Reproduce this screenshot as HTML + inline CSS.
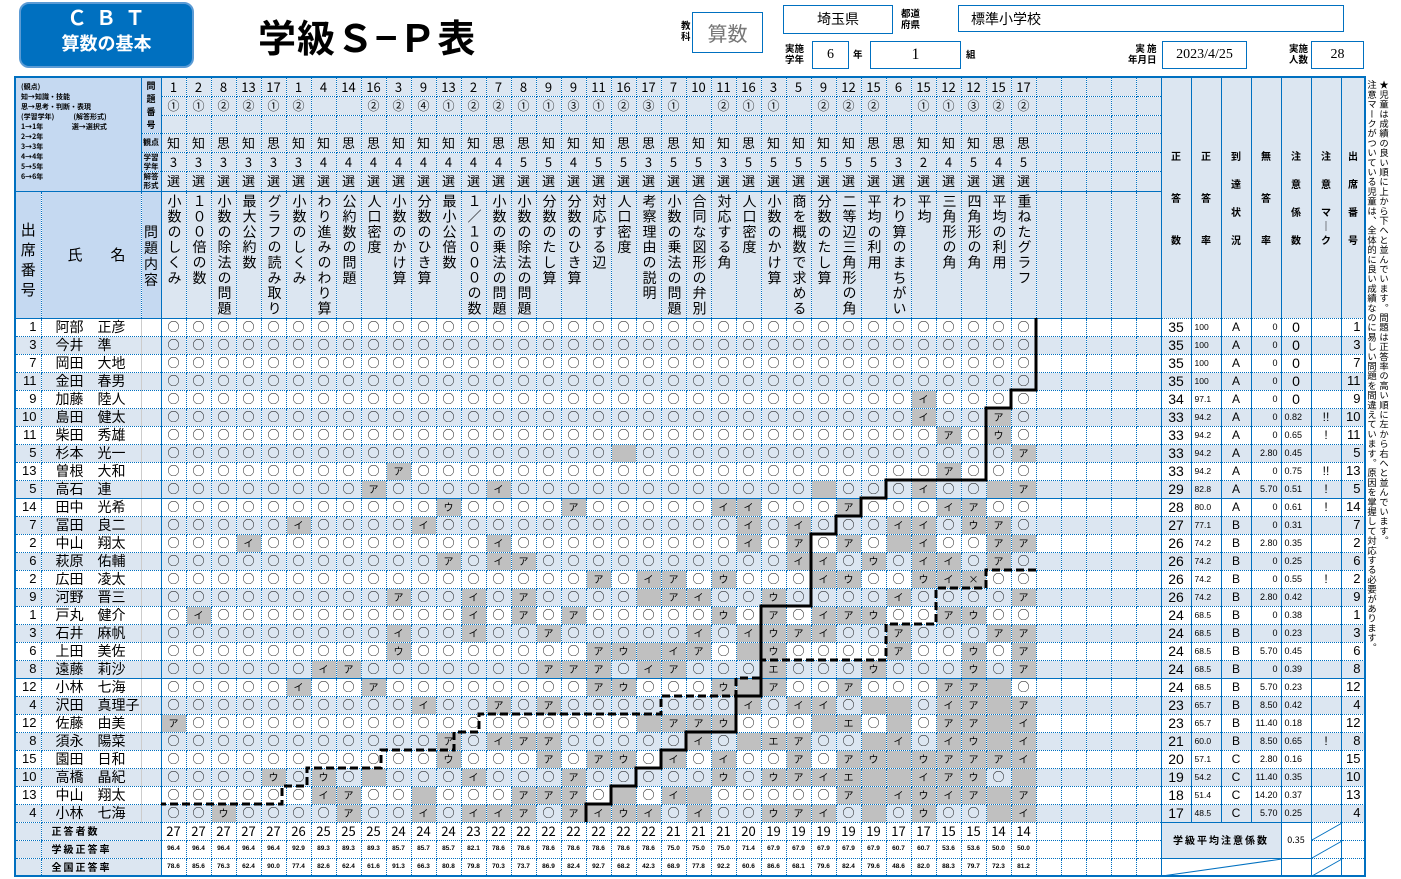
<!DOCTYPE html>
<html><head><meta charset="utf-8">
<style>
body{margin:0;width:1401px;height:879px;position:relative;background:#fff;font-family:"Liberation Sans","Noto Sans CJK JP",sans-serif;overflow:hidden;color:#000}
.abs{position:absolute}
.logo{left:19px;top:2px;width:171px;height:62px;background:#0070c0;border:2px solid #5b9bd5;border-radius:10px;color:#fff;text-align:center;font-weight:bold}
.title{left:258px;top:8px;font-size:38px;font-weight:bold;letter-spacing:1px;font-family:"Noto Sans CJK JP",sans-serif}
.bx{border:1px solid #0070c0;text-align:center;font-family:"Liberation Serif","Noto Sans CJK JP",serif}
.lbl{font-size:9.5px;line-height:11px;font-weight:bold;font-family:"Noto Sans CJK JP",sans-serif}
#t{position:absolute;left:14px;top:76px;border-collapse:collapse;table-layout:fixed;width:1351px;border:2px solid #0070c0}
#t td{border:1px dotted #0070c0;padding:0;text-align:center;font-size:12px;line-height:14px;overflow:hidden;white-space:nowrap;font-family:"Noto Sans CJK JP",sans-serif}
#t tr.d{height:18px}
#t tr.e td{background:#dce6f1}
#t tr td.g{background:#c0c0c0;font-size:10px}
#t tr.s td{border-bottom:1px solid #0070c0}
#t tr.d td:nth-child(n+44){border-left:1px solid #0070c0;border-right:1px solid #0070c0;font-family:"Liberation Sans",sans-serif}
#t td.k{border-left:1px solid #ccc;border-right:1px solid #0070c0}
#t td.nm{text-align:right;padding-right:4px;font-size:13px;font-family:"Liberation Sans",sans-serif}
#t td.n{text-align:left;padding-left:14px;font-size:14px}
#t td.c{background:#c5d9f1}
#t tr.h td{background:#dce6f1}
#t tr.h td.c{background:#c5d9f1}
#t tr.hb td{border-bottom:1px solid #0070c0}
#t td.rc{background:#c5d9f1;border-left:1px solid #0070c0;border-right:1px solid #0070c0;font-size:10px;line-height:14px;font-weight:bold;white-space:normal}
#t td.p{font-size:8.5px;text-align:left;padding-left:3px}
#t td.q{font-size:9px;text-align:right;padding-right:3px}
#t td.w{font-size:9px;text-align:left;padding-left:3px}
#t td.big{font-size:14px}
.v{writing-mode:vertical-rl;font-size:14px;line-height:25px;width:25px;height:124px;margin:2px auto 0;letter-spacing:1.3px;font-family:"Noto Sans CJK JP",sans-serif;text-align:left}
#t td.f1{font-size:13px}
#t tr.fr td{font-size:6.5px;font-weight:bold;font-family:"Liberation Sans",sans-serif}
#t td.fl{background:#dce6f1;text-align:left;padding-left:10px;font-size:10px!important;font-weight:bold;letter-spacing:2px;font-family:"Noto Sans CJK JP",sans-serif!important}
.note{left:1366px;top:80px;writing-mode:vertical-rl;font-size:9.3px;line-height:12px;letter-spacing:0.4px;height:600px;font-family:"Noto Sans CJK JP",sans-serif}
</style></head><body>
<div class="abs logo"><div style="font-size:20px;letter-spacing:9px;margin-top:3px;line-height:24px;padding-left:8px">ＣＢＴ</div><div style="font-size:18px;line-height:24px;font-family:'Noto Sans CJK JP',sans-serif">算数の基本</div></div>
<div class="abs title">学級Ｓ−Ｐ表</div>

<div class="abs lbl" style="left:681px;top:20px;width:10px">教<br>科</div>
<div class="abs bx" style="left:692px;top:12px;width:69px;height:39px;line-height:39px;font-size:20px;color:#777;font-family:'Noto Sans CJK JP',sans-serif">算数</div>
<div class="abs bx" style="left:783px;top:5px;width:108px;height:27px;line-height:27px;font-size:14px;font-family:'Noto Sans CJK JP',sans-serif">埼玉県</div>
<div class="abs lbl" style="left:901px;top:8px">都道<br>府県</div>
<div class="abs bx" style="left:958px;top:5px;height:27px;line-height:27px;font-size:14px;text-align:left;padding-left:12px;box-sizing:border-box;width:386px;font-family:'Noto Sans CJK JP',sans-serif">標準小学校</div>
<div class="abs lbl" style="left:785px;top:43px">実施<br>学年</div>
<div class="abs bx" style="left:812px;top:41px;width:35px;height:26px;line-height:26px;font-size:14px">6</div>
<div class="abs lbl" style="left:853px;top:49px">年</div>
<div class="abs bx" style="left:870px;top:41px;width:89px;height:26px;line-height:26px;font-size:16px">1</div>
<div class="abs lbl" style="left:966px;top:49px">組</div>
<div class="abs lbl" style="left:1128px;top:43px;text-align:right">実 施<br>年月日</div>
<div class="abs bx" style="left:1162px;top:41px;width:83px;height:26px;line-height:26px;font-size:14px">2023/4/25</div>
<div class="abs lbl" style="left:1289px;top:43px">実施<br>人数</div>
<div class="abs bx" style="left:1311px;top:41px;width:51px;height:26px;line-height:26px;font-size:14px">28</div>

<div class="abs note">★児童は成績の良い順に上から下へと並んでいます。問題は正答率の高い順に左から右へと並んでいます。<br>注意マークがついている児童は、全体的に良い成績なのに易しい問題を間違えています。原因を掌握して対応する必要があります。</div>

<table id="t">
<colgroup><col style="width:26px"><col style="width:100px"><col style="width:20px">
<col style="width:25px"><col style="width:25px"><col style="width:25px"><col style="width:25px"><col style="width:25px"><col style="width:25px"><col style="width:25px"><col style="width:25px"><col style="width:25px"><col style="width:25px"><col style="width:25px"><col style="width:25px"><col style="width:25px"><col style="width:25px"><col style="width:25px"><col style="width:25px"><col style="width:25px"><col style="width:25px"><col style="width:25px"><col style="width:25px"><col style="width:25px"><col style="width:25px"><col style="width:25px"><col style="width:25px"><col style="width:25px"><col style="width:25px"><col style="width:25px"><col style="width:25px"><col style="width:25px"><col style="width:25px"><col style="width:25px"><col style="width:25px"><col style="width:25px"><col style="width:25px"><col style="width:25px">
<col style="width:25px"><col style="width:25px"><col style="width:25px"><col style="width:25px"><col style="width:25px">
<col style="width:30px"><col style="width:30px"><col style="width:30px"><col style="width:30px"><col style="width:30px"><col style="width:30px"><col style="width:24px"></colgroup>

<tr class="h" style="height:19px;font-size:14px">
<td colspan="2" rowspan="6" class="c" style="text-align:left;vertical-align:top;padding:4px 0 0 5px;font-size:7px;line-height:10px;font-weight:bold;white-space:pre;border-right:1px solid #0070c0;border-bottom:1px solid #0070c0;font-family:'Noto Sans CJK JP',sans-serif">(観点)
知→知識・技能
思→思考・判断・表現
(学習学年)            (解答形式)
1→1年                  選→選択式
2→2年
3→3年
4→4年
5→5年
6→6年</td>
<td rowspan="3" class="c" style="font-size:9px;line-height:13px;font-weight:bold;white-space:normal;border-right:1px solid #0070c0">問<br>題<br>番<br>号</td>
<td class=f1>1<td class=f1>2<td class=f1>8<td class=f1>13<td class=f1>17<td class=f1>1<td class=f1>4<td class=f1>14<td class=f1>16<td class=f1>3<td class=f1>9<td class=f1>13<td class=f1>2<td class=f1>7<td class=f1>8<td class=f1>9<td class=f1>9<td class=f1>11<td class=f1>16<td class=f1>17<td class=f1>7<td class=f1>10<td class=f1>11<td class=f1>16<td class=f1>3<td class=f1>5<td class=f1>9<td class=f1>12<td class=f1>15<td class=f1>6<td class=f1>15<td class=f1>12<td class=f1>12<td class=f1>15<td class=f1>17
<td><td><td><td><td>
<td rowspan="7" class="rc">正<br><br><br>答<br><br><br>数</td>
<td rowspan="7" class="rc">正<br><br><br>答<br><br><br>率</td>
<td rowspan="7" class="rc">到<br><br>達<br><br>状<br><br>況</td>
<td rowspan="7" class="rc">無<br><br><br>答<br><br><br>率</td>
<td rowspan="7" class="rc">注<br><br>意<br><br>係<br><br>数</td>
<td rowspan="7" class="rc">注<br><br>意<br><br>マ<br>｜<br>ク</td>
<td rowspan="7" class="rc">出<br><br>席<br><br>番<br><br>号</td>
</tr>
<tr class="h" style="height:19px"><td>①<td>①<td>②<td>②<td>①<td>②<td><td><td>②<td>②<td>④<td>①<td>②<td>②<td>①<td>①<td>③<td>①<td>②<td>③<td>①<td><td>②<td>①<td>①<td><td>②<td>②<td>②<td><td>①<td>①<td>③<td>②<td>②<td><td><td><td><td></tr>
<tr class="h" style="height:18px"><td><td><td><td><td><td><td><td><td><td><td><td><td><td><td><td><td><td><td><td><td><td><td><td><td><td><td><td><td><td><td><td><td><td><td><td><td><td><td><td><td></tr>
<tr class="h" style="height:19px;"><td class="c" style="font-size:8px;font-weight:bold;border-right:1px solid #0070c0">観点<td class=f1>知<td class=f1>知<td class=f1>思<td class=f1>知<td class=f1>思<td class=f1>知<td class=f1>知<td class=f1>思<td class=f1>思<td class=f1>知<td class=f1>知<td class=f1>知<td class=f1>知<td class=f1>思<td class=f1>思<td class=f1>知<td class=f1>知<td class=f1>知<td class=f1>思<td class=f1>思<td class=f1>思<td class=f1>知<td class=f1>知<td class=f1>思<td class=f1>知<td class=f1>知<td class=f1>知<td class=f1>知<td class=f1>思<td class=f1>思<td class=f1>知<td class=f1>知<td class=f1>知<td class=f1>思<td class=f1>思<td><td><td><td><td></tr>
<tr class="h" style="height:19px"><td class="c" style="font-size:7.5px;line-height:9px;font-weight:bold;white-space:normal;border-right:1px solid #0070c0">学習<br>学年<td class=f1>3<td class=f1>3<td class=f1>3<td class=f1>3<td class=f1>3<td class=f1>3<td class=f1>4<td class=f1>4<td class=f1>4<td class=f1>4<td class=f1>4<td class=f1>4<td class=f1>4<td class=f1>4<td class=f1>5<td class=f1>5<td class=f1>4<td class=f1>5<td class=f1>5<td class=f1>3<td class=f1>5<td class=f1>5<td class=f1>3<td class=f1>5<td class=f1>5<td class=f1>5<td class=f1>5<td class=f1>5<td class=f1>5<td class=f1>3<td class=f1>2<td class=f1>4<td class=f1>5<td class=f1>4<td class=f1>5<td><td><td><td><td></tr>
<tr class="h hb" style="height:20px"><td class="c" style="font-size:7.5px;line-height:9px;font-weight:bold;white-space:normal;border-right:1px solid #0070c0">解答<br>形式<td class=f1>選<td class=f1>選<td class=f1>選<td class=f1>選<td class=f1>選<td class=f1>選<td class=f1>選<td class=f1>選<td class=f1>選<td class=f1>選<td class=f1>選<td class=f1>選<td class=f1>選<td class=f1>選<td class=f1>選<td class=f1>選<td class=f1>選<td class=f1>選<td class=f1>選<td class=f1>選<td class=f1>選<td class=f1>選<td class=f1>選<td class=f1>選<td class=f1>選<td class=f1>選<td class=f1>選<td class=f1>選<td class=f1>選<td class=f1>選<td class=f1>選<td class=f1>選<td class=f1>選<td class=f1>選<td class=f1>選<td><td><td><td><td></tr>
<tr class="h hb" style="height:127px">
<td class="c" style="font-size:15px;line-height:20px;white-space:normal;padding-top:10px">出<br>席<br>番<br>号</td>
<td class="c" style="font-size:15px;letter-spacing:28px;padding-left:26px">氏名</td>
<td class="c" style="font-size:14px;line-height:16px;white-space:normal;border-right:1px solid #0070c0;padding-top:2px">問<br>題<br>内<br>容</td>
<td style="vertical-align:top"><div class=v>小数のしくみ</div>
<td style="vertical-align:top"><div class=v>１００倍の数</div>
<td style="vertical-align:top"><div class=v>小数の除法の問題</div>
<td style="vertical-align:top"><div class=v>最大公約数</div>
<td style="vertical-align:top"><div class=v>グラフの読み取り</div>
<td style="vertical-align:top"><div class=v>小数のしくみ</div>
<td style="vertical-align:top"><div class=v>わり進みのわり算</div>
<td style="vertical-align:top"><div class=v>公約数の問題</div>
<td style="vertical-align:top"><div class=v>人口密度</div>
<td style="vertical-align:top"><div class=v>小数のかけ算</div>
<td style="vertical-align:top"><div class=v>分数のひき算</div>
<td style="vertical-align:top"><div class=v>最小公倍数</div>
<td style="vertical-align:top"><div class=v>１／１０００の数</div>
<td style="vertical-align:top"><div class=v>小数の乗法の問題</div>
<td style="vertical-align:top"><div class=v>小数の除法の問題</div>
<td style="vertical-align:top"><div class=v>分数のたし算</div>
<td style="vertical-align:top"><div class=v>分数のひき算</div>
<td style="vertical-align:top"><div class=v>対応する辺</div>
<td style="vertical-align:top"><div class=v>人口密度</div>
<td style="vertical-align:top"><div class=v>考察理由の説明</div>
<td style="vertical-align:top"><div class=v>小数の乗法の問題</div>
<td style="vertical-align:top"><div class=v>合同な図形の弁別</div>
<td style="vertical-align:top"><div class=v>対応する角</div>
<td style="vertical-align:top"><div class=v>人口密度</div>
<td style="vertical-align:top"><div class=v>小数のかけ算</div>
<td style="vertical-align:top"><div class=v>商を概数で求める</div>
<td style="vertical-align:top"><div class=v>分数のたし算</div>
<td style="vertical-align:top"><div class=v>二等辺三角形の角</div>
<td style="vertical-align:top"><div class=v>平均の利用</div>
<td style="vertical-align:top"><div class=v>わり算のまちがい</div>
<td style="vertical-align:top"><div class=v>平均</div>
<td style="vertical-align:top"><div class=v>三角形の角</div>
<td style="vertical-align:top"><div class=v>四角形の角</div>
<td style="vertical-align:top"><div class=v>平均の利用</div>
<td style="vertical-align:top"><div class=v>重ねたグラフ</div>
<td><td><td><td><td></tr>

<tr class="d"><td class=nm>1<td class=n>阿部　正彦<td class=k><td>○<td>○<td>○<td>○<td>○<td>○<td>○<td>○<td>○<td>○<td>○<td>○<td>○<td>○<td>○<td>○<td>○<td>○<td>○<td>○<td>○<td>○<td>○<td>○<td>○<td>○<td>○<td>○<td>○<td>○<td>○<td>○<td>○<td>○<td>○<td><td><td><td><td><td class=big>35<td class=p>100<td>A<td class=q>0<td class=big>0<td><td class="nm">1</tr>
<tr class="d e"><td class=nm>3<td class=n>今井　準<td class=k><td>○<td>○<td>○<td>○<td>○<td>○<td>○<td>○<td>○<td>○<td>○<td>○<td>○<td>○<td>○<td>○<td>○<td>○<td>○<td>○<td>○<td>○<td>○<td>○<td>○<td>○<td>○<td>○<td>○<td>○<td>○<td>○<td>○<td>○<td>○<td><td><td><td><td><td class=big>35<td class=p>100<td>A<td class=q>0<td class=big>0<td><td class="nm">3</tr>
<tr class="d"><td class=nm>7<td class=n>岡田　大地<td class=k><td>○<td>○<td>○<td>○<td>○<td>○<td>○<td>○<td>○<td>○<td>○<td>○<td>○<td>○<td>○<td>○<td>○<td>○<td>○<td>○<td>○<td>○<td>○<td>○<td>○<td>○<td>○<td>○<td>○<td>○<td>○<td>○<td>○<td>○<td>○<td><td><td><td><td><td class=big>35<td class=p>100<td>A<td class=q>0<td class=big>0<td><td class="nm">7</tr>
<tr class="d e"><td class=nm>11<td class=n>金田　春男<td class=k><td>○<td>○<td>○<td>○<td>○<td>○<td>○<td>○<td>○<td>○<td>○<td>○<td>○<td>○<td>○<td>○<td>○<td>○<td>○<td>○<td>○<td>○<td>○<td>○<td>○<td>○<td>○<td>○<td>○<td>○<td>○<td>○<td>○<td>○<td>○<td><td><td><td><td><td class=big>35<td class=p>100<td>A<td class=q>0<td class=big>0<td><td class="nm">11</tr>
<tr class="d"><td class=nm>9<td class=n>加藤　陸人<td class=k><td>○<td>○<td>○<td>○<td>○<td>○<td>○<td>○<td>○<td>○<td>○<td>○<td>○<td>○<td>○<td>○<td>○<td>○<td>○<td>○<td>○<td>○<td>○<td>○<td>○<td>○<td>○<td>○<td>○<td>○<td class=g>イ<td>○<td>○<td>○<td>○<td><td><td><td><td><td class=big>34<td class=p>97.1<td>A<td class=q>0<td class=big>0<td><td class="nm">9</tr>
<tr class="d e"><td class=nm>10<td class=n>島田　健太<td class=k><td>○<td>○<td>○<td>○<td>○<td>○<td>○<td>○<td>○<td>○<td>○<td>○<td>○<td>○<td>○<td>○<td>○<td>○<td>○<td>○<td>○<td>○<td>○<td>○<td>○<td>○<td>○<td>○<td>○<td>○<td class=g>イ<td>○<td>○<td class=g>ア<td>○<td><td><td><td><td><td class=big>33<td class=p>94.2<td>A<td class=q>0<td class=w>0.82<td>!!<td class="nm">10</tr>
<tr class="d"><td class=nm>11<td class=n>柴田　秀雄<td class=k><td>○<td>○<td>○<td>○<td>○<td>○<td>○<td>○<td>○<td>○<td>○<td>○<td>○<td>○<td>○<td>○<td>○<td>○<td>○<td>○<td>○<td>○<td>○<td>○<td>○<td>○<td>○<td>○<td>○<td>○<td>○<td class=g>ア<td>○<td class=g>ウ<td>○<td><td><td><td><td><td class=big>33<td class=p>94.2<td>A<td class=q>0<td class=w>0.65<td>!<td class="nm">11</tr>
<tr class="d e"><td class=nm>5<td class=n>杉本　光一<td class=k><td>○<td>○<td>○<td>○<td>○<td>○<td>○<td>○<td>○<td>○<td>○<td>○<td>○<td>○<td>○<td>○<td>○<td>○<td class=g><td>○<td>○<td>○<td>○<td>○<td>○<td>○<td>○<td>○<td>○<td>○<td>○<td>○<td>○<td>○<td class=g>ア<td><td><td><td><td><td class=big>33<td class=p>94.2<td>A<td class=q>2.80<td class=w>0.45<td><td class="nm">5</tr>
<tr class="d"><td class=nm>13<td class=n>曽根　大和<td class=k><td>○<td>○<td>○<td>○<td>○<td>○<td>○<td>○<td>○<td class=g>ア<td>○<td>○<td>○<td>○<td>○<td>○<td>○<td>○<td>○<td>○<td>○<td>○<td>○<td>○<td>○<td>○<td>○<td>○<td>○<td>○<td>○<td class=g>ア<td>○<td>○<td>○<td><td><td><td><td><td class=big>33<td class=p>94.2<td>A<td class=q>0<td class=w>0.75<td>!!<td class="nm">13</tr>
<tr class="d e s"><td class=nm>5<td class=n>高石　連<td class=k><td>○<td>○<td>○<td>○<td>○<td>○<td>○<td>○<td class=g>ア<td>○<td>○<td>○<td>○<td class=g>イ<td>○<td>○<td>○<td>○<td>○<td>○<td>○<td>○<td>○<td>○<td>○<td>○<td class=g><td>○<td>○<td>○<td class=g>イ<td>○<td>○<td class=g><td class=g>ア<td><td><td><td><td><td class=big>29<td class=p>82.8<td>A<td class=q>5.70<td class=w>0.51<td>!<td class="nm">5</tr>
<tr class="d"><td class=nm>14<td class=n>田中　光希<td class=k><td>○<td>○<td>○<td>○<td>○<td>○<td>○<td>○<td>○<td>○<td>○<td class=g>ウ<td>○<td>○<td>○<td>○<td class=g>ア<td>○<td>○<td>○<td>○<td>○<td class=g>イ<td class=g>イ<td>○<td>○<td>○<td class=g>ア<td>○<td>○<td>○<td class=g>イ<td class=g>ア<td>○<td>○<td><td><td><td><td><td class=big>28<td class=p>80.0<td>A<td class=q>0<td class=w>0.61<td>!<td class="nm">14</tr>
<tr class="d e"><td class=nm>7<td class=n>冨田　良二<td class=k><td>○<td>○<td>○<td>○<td>○<td class=g>イ<td>○<td>○<td>○<td>○<td class=g>イ<td>○<td>○<td>○<td>○<td>○<td>○<td>○<td>○<td>○<td>○<td>○<td>○<td class=g>イ<td>○<td class=g>イ<td>○<td>○<td>○<td class=g>イ<td class=g>イ<td>○<td class=g>ウ<td class=g>ア<td>○<td><td><td><td><td><td class=big>27<td class=p>77.1<td>B<td class=q>0<td class=w>0.31<td><td class="nm">7</tr>
<tr class="d"><td class=nm>2<td class=n>中山　翔太<td class=k><td>○<td>○<td>○<td class=g>イ<td>○<td>○<td>○<td>○<td>○<td>○<td>○<td>○<td>○<td class=g>イ<td>○<td>○<td>○<td>○<td>○<td>○<td>○<td>○<td>○<td class=g>イ<td>○<td class=g>ア<td>○<td class=g>ア<td>○<td class=g><td class=g>イ<td>○<td>○<td class=g>ア<td class=g>ア<td><td><td><td><td><td class=big>26<td class=p>74.2<td>B<td class=q>2.80<td class=w>0.35<td><td class="nm">2</tr>
<tr class="d e"><td class=nm>6<td class=n>萩原　佑輔<td class=k><td>○<td>○<td>○<td>○<td>○<td>○<td>○<td>○<td>○<td>○<td>○<td class=g>ア<td>○<td class=g>イ<td class=g>ア<td>○<td>○<td>○<td>○<td>○<td>○<td>○<td>○<td>○<td>○<td class=g>イ<td class=g>イ<td>○<td class=g>ウ<td>○<td class=g>イ<td class=g>イ<td>○<td class=g>ア<td>○<td><td><td><td><td><td class=big>26<td class=p>74.2<td>B<td class=q>0<td class=w>0.25<td><td class="nm">6</tr>
<tr class="d"><td class=nm>2<td class=n>広田　凌太<td class=k><td>○<td>○<td>○<td>○<td>○<td>○<td>○<td>○<td>○<td>○<td>○<td>○<td>○<td>○<td>○<td>○<td>○<td class=g>ア<td>○<td class=g>イ<td class=g>ア<td>○<td class=g>ウ<td>○<td>○<td>○<td class=g>イ<td class=g>ウ<td>○<td>○<td class=g>ウ<td class=g>イ<td class=g>×<td>○<td>○<td><td><td><td><td><td class=big>26<td class=p>74.2<td>B<td class=q>0<td class=w>0.55<td>!<td class="nm">2</tr>
<tr class="d e"><td class=nm>9<td class=n>河野　晋三<td class=k><td>○<td>○<td>○<td>○<td>○<td>○<td>○<td>○<td>○<td class=g>ア<td>○<td>○<td class=g>イ<td>○<td class=g>ア<td>○<td>○<td>○<td>○<td class=g><td class=g>ア<td class=g>イ<td>○<td>○<td class=g>ウ<td>○<td>○<td>○<td>○<td class=g>イ<td>○<td>○<td>○<td>○<td class=g>ア<td><td><td><td><td><td class=big>26<td class=p>74.2<td>B<td class=q>2.80<td class=w>0.42<td><td class="nm">9</tr>
<tr class="d"><td class=nm>1<td class=n>戸丸　健介<td class=k><td>○<td class=g>イ<td>○<td>○<td>○<td>○<td>○<td>○<td>○<td>○<td>○<td>○<td class=g>イ<td>○<td class=g>ア<td>○<td class=g>ア<td>○<td>○<td>○<td>○<td>○<td class=g>ウ<td>○<td class=g>ア<td>○<td class=g>イ<td class=g>ア<td class=g>ウ<td>○<td>○<td class=g>ア<td class=g>ウ<td>○<td>○<td><td><td><td><td><td class=big>24<td class=p>68.5<td>B<td class=q>0<td class=w>0.38<td><td class="nm">1</tr>
<tr class="d e"><td class=nm>3<td class=n>石井　麻帆<td class=k><td>○<td>○<td>○<td>○<td>○<td>○<td>○<td>○<td>○<td class=g>イ<td>○<td>○<td class=g>イ<td>○<td>○<td class=g>ア<td>○<td>○<td>○<td>○<td>○<td class=g>イ<td>○<td class=g>イ<td class=g>ウ<td class=g>ア<td class=g>イ<td>○<td>○<td class=g>ア<td>○<td>○<td>○<td class=g>ア<td class=g>ア<td><td><td><td><td><td class=big>24<td class=p>68.5<td>B<td class=q>0<td class=w>0.23<td><td class="nm">3</tr>
<tr class="d"><td class=nm>6<td class=n>上田　美佐<td class=k><td>○<td>○<td>○<td>○<td>○<td>○<td>○<td>○<td>○<td class=g>ウ<td>○<td>○<td>○<td>○<td>○<td>○<td>○<td class=g>ア<td class=g>ウ<td class=g><td class=g>イ<td class=g>ア<td>○<td class=g><td class=g>ウ<td>○<td>○<td>○<td>○<td class=g>ア<td>○<td>○<td class=g>ウ<td>○<td class=g>ア<td><td><td><td><td><td class=big>24<td class=p>68.5<td>B<td class=q>5.70<td class=w>0.45<td><td class="nm">6</tr>
<tr class="d e s"><td class=nm>8<td class=n>遠藤　莉沙<td class=k><td>○<td>○<td>○<td>○<td>○<td>○<td class=g>イ<td class=g>ア<td>○<td>○<td>○<td>○<td>○<td>○<td>○<td class=g>ア<td class=g>ア<td class=g>ア<td>○<td class=g>イ<td class=g>ア<td>○<td>○<td>○<td class=g>エ<td>○<td>○<td>○<td class=g>ウ<td>○<td>○<td>○<td class=g>ウ<td>○<td class=g>ア<td><td><td><td><td><td class=big>24<td class=p>68.5<td>B<td class=q>0<td class=w>0.39<td><td class="nm">8</tr>
<tr class="d"><td class=nm>12<td class=n>小林　七海<td class=k><td>○<td>○<td>○<td>○<td>○<td class=g>イ<td>○<td>○<td class=g>ア<td>○<td>○<td>○<td>○<td>○<td>○<td>○<td>○<td class=g>ア<td class=g>ウ<td>○<td>○<td>○<td class=g>ウ<td class=g><td class=g>ア<td>○<td>○<td class=g>ア<td>○<td>○<td>○<td class=g>ア<td class=g>ア<td class=g><td>○<td><td><td><td><td><td class=big>24<td class=p>68.5<td>B<td class=q>5.70<td class=w>0.23<td><td class="nm">12</tr>
<tr class="d e"><td class=nm>4<td class=n>沢田　真理子<td class=k><td>○<td>○<td>○<td>○<td>○<td>○<td>○<td>○<td>○<td>○<td class=g>イ<td>○<td>○<td class=g>ア<td>○<td class=g>ア<td>○<td>○<td>○<td>○<td>○<td>○<td>○<td class=g>イ<td>○<td class=g>イ<td class=g>イ<td>○<td class=g><td class=g><td>○<td class=g>イ<td class=g>ア<td class=g><td class=g>ア<td><td><td><td><td><td class=big>23<td class=p>65.7<td>B<td class=q>8.50<td class=w>0.42<td><td class="nm">4</tr>
<tr class="d"><td class=nm>12<td class=n>佐藤　由美<td class=k><td class=g>ア<td>○<td>○<td>○<td>○<td>○<td>○<td>○<td>○<td>○<td>○<td>○<td>○<td>○<td>○<td>○<td>○<td>○<td>○<td class=g><td class=g>ア<td class=g>ア<td class=g>ウ<td>○<td>○<td>○<td class=g><td class=g>エ<td>○<td class=g><td>○<td class=g>ア<td class=g>ア<td class=g><td class=g>イ<td><td><td><td><td><td class=big>23<td class=p>65.7<td>B<td class=q>11.40<td class=w>0.18<td><td class="nm">12</tr>
<tr class="d e"><td class=nm>8<td class=n>須永　陽菜<td class=k><td>○<td>○<td>○<td>○<td>○<td>○<td>○<td>○<td>○<td>○<td>○<td class=g>ア<td>○<td class=g>イ<td class=g>ア<td class=g>ア<td>○<td>○<td>○<td>○<td>○<td class=g>イ<td>○<td class=g><td class=g>エ<td class=g>ア<td>○<td>○<td class=g><td class=g>イ<td>○<td class=g>イ<td class=g>ウ<td class=g><td class=g>イ<td><td><td><td><td><td class=big>21<td class=p>60.0<td>B<td class=q>8.50<td class=w>0.65<td>!<td class="nm">8</tr>
<tr class="d"><td class=nm>15<td class=n>園田　日和<td class=k><td>○<td>○<td>○<td>○<td>○<td>○<td>○<td>○<td>○<td>○<td>○<td class=g>ウ<td>○<td>○<td>○<td class=g>ア<td>○<td class=g>ア<td class=g>ウ<td>○<td class=g>イ<td>○<td class=g>イ<td>○<td>○<td class=g>ア<td>○<td class=g>ア<td class=g>ウ<td class=g><td class=g>ウ<td class=g>ア<td class=g>ア<td class=g>ア<td class=g>イ<td><td><td><td><td><td class=big>20<td class=p>57.1<td>C<td class=q>2.80<td class=w>0.16<td><td class="nm">15</tr>
<tr class="d e"><td class=nm>10<td class=n>高橋　晶紀<td class=k><td>○<td>○<td>○<td>○<td class=g>ウ<td>○<td class=g>ウ<td>○<td class=g><td>○<td>○<td>○<td class=g>イ<td>○<td>○<td>○<td class=g>ア<td>○<td>○<td>○<td>○<td>○<td class=g>ウ<td>○<td class=g>ウ<td class=g>ア<td class=g>イ<td class=g>エ<td class=g><td class=g><td class=g>イ<td class=g>ア<td class=g>ウ<td>○<td class=g><td><td><td><td><td><td class=big>19<td class=p>54.2<td>C<td class=q>11.40<td class=w>0.35<td><td class="nm">10</tr>
<tr class="d"><td class=nm>13<td class=n>中山　翔太<td class=k><td>○<td>○<td>○<td>○<td>○<td>○<td class=g>イ<td class=g>ア<td>○<td>○<td class=g><td>○<td>○<td>○<td class=g>ア<td class=g>ア<td class=g>ア<td>○<td class=g><td>○<td class=g>イ<td class=g><td>○<td>○<td>○<td>○<td>○<td class=g>ア<td class=g><td class=g>イ<td class=g>ウ<td class=g>イ<td class=g>ア<td class=g><td class=g>ア<td><td><td><td><td><td class=big>18<td class=p>51.4<td>C<td class=q>14.20<td class=w>0.37<td><td class="nm">13</tr>
<tr class="d e"><td class=nm>4<td class=n>小林　七海<td class=k><td>○<td>○<td class=g>ウ<td>○<td>○<td>○<td>○<td class=g>ア<td>○<td>○<td class=g>イ<td>○<td class=g>イ<td class=g>イ<td class=g>ア<td>○<td class=g>ア<td class=g>イ<td class=g>ウ<td class=g>イ<td>○<td class=g>イ<td>○<td>○<td class=g>ウ<td class=g>ア<td class=g>イ<td>○<td class=g><td>○<td class=g>ウ<td>○<td>○<td class=g><td class=g>イ<td><td><td><td><td><td class=big>17<td class=p>48.5<td>C<td class=q>5.70<td class=w>0.25<td><td class="nm">4</tr>

<tr style="height:18px"><td class="fl" style="border-right:none"><td colspan="2" class="fl" style="border-right:1px solid #0070c0">正答者数<td class=f1>27<td class=f1>27<td class=f1>27<td class=f1>27<td class=f1>27<td class=f1>26<td class=f1>25<td class=f1>25<td class=f1>25<td class=f1>24<td class=f1>24<td class=f1>24<td class=f1>23<td class=f1>22<td class=f1>22<td class=f1>22<td class=f1>22<td class=f1>22<td class=f1>22<td class=f1>22<td class=f1>21<td class=f1>21<td class=f1>21<td class=f1>20<td class=f1>19<td class=f1>19<td class=f1>19<td class=f1>19<td class=f1>19<td class=f1>17<td class=f1>17<td class=f1>15<td class=f1>15<td class=f1>14<td class=f1>14<td><td><td><td><td>
<td colspan="4" rowspan="2" style="background:#dce6f1;font-size:10px;font-weight:bold;letter-spacing:2px;border:1px solid #0070c0">学級平均注意係数<td rowspan="2" style="font-size:9px;border:1px solid #0070c0">0.35<td style="border-left:1px solid #0070c0;border-right:1px solid #0070c0"><td style="border-left:1px solid #0070c0"></tr>
<tr class="fr" style="height:18px"><td class="fl"><td colspan="2" class="fl" style="border-right:1px solid #0070c0">学級正答率<td>96.4<td>96.4<td>96.4<td>96.4<td>96.4<td>92.9<td>89.3<td>89.3<td>89.3<td>85.7<td>85.7<td>85.7<td>82.1<td>78.6<td>78.6<td>78.6<td>78.6<td>78.6<td>78.6<td>78.6<td>75.0<td>75.0<td>75.0<td>71.4<td>67.9<td>67.9<td>67.9<td>67.9<td>67.9<td>60.7<td>60.7<td>53.6<td>53.6<td>50.0<td>50.0<td><td><td><td><td><td style="border-left:1px solid #0070c0;border-right:1px solid #0070c0"><td style="border-left:1px solid #0070c0"></tr>
<tr class="fr" style="height:18px"><td class="fl"><td colspan="2" class="fl" style="border-right:1px solid #0070c0">全国正答率<td>78.6<td>85.6<td>76.3<td>62.4<td>90.0<td>77.4<td>82.6<td>62.4<td>61.6<td>91.3<td>66.3<td>80.8<td>79.8<td>70.3<td>73.7<td>86.9<td>82.4<td>92.7<td>68.2<td>42.3<td>68.9<td>77.8<td>92.2<td>60.6<td>86.6<td>68.1<td>79.6<td>82.4<td>79.6<td>48.6<td>82.0<td>88.3<td>79.7<td>72.3<td>81.2<td><td><td><td><td><td colspan="4" style="border:1px solid #0070c0"><td style="border:1px solid #0070c0"><td style="border-left:1px solid #0070c0;border-right:1px solid #0070c0"><td style="border-left:1px solid #0070c0"></tr>
</table>

<svg class="abs" style="left:0;top:0;pointer-events:none" width="1401" height="879" viewBox="0 0 1401 879">
<path d="M1036 318V390H1011V408H986V480H886V498H861V516H836V534H811V606H761V696H736V732H686V750H661V768H636V786H611V804H586V822" fill="none" stroke="#000" stroke-width="3"/>
<path d="M1036 570H986V588H936V624H886V660H761V678H736V696H661V714H479V732H454V750H381V768H307V786H282V804H161" fill="none" stroke="#000" stroke-width="3" stroke-dasharray="8,4"/>
<g stroke="#0070c0" stroke-width="1">
<line x1="1312" y1="840" x2="1342" y2="823"/><line x1="1312" y1="858" x2="1342" y2="841"/><line x1="1312" y1="876" x2="1342" y2="859"/><line x1="1162" y1="876" x2="1282" y2="859"/>
</g>
</svg>
</body></html>
